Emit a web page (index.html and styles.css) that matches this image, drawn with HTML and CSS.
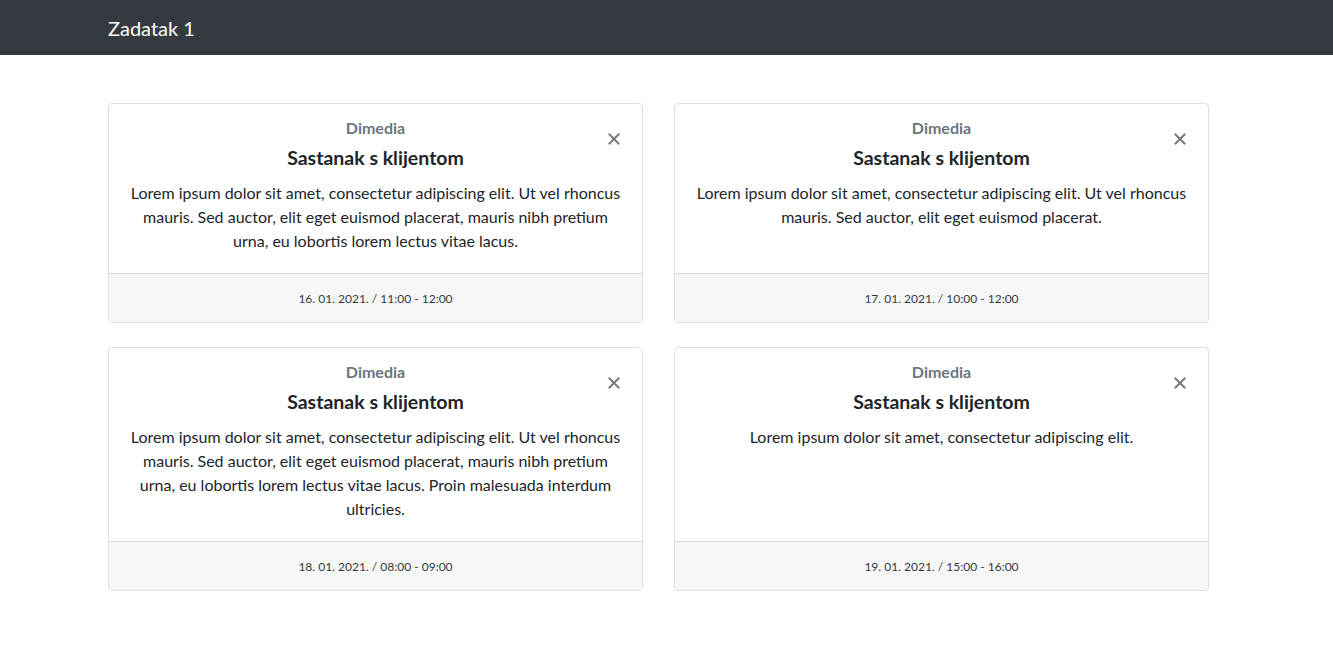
FILE: index.html
```html
<!DOCTYPE html>
<html lang="hr">
<head>
<meta charset="utf-8">
<title>Zadatak 1</title>
<link rel="stylesheet" href="styles.css">
</head>
<body>
<nav class="navbar">
  <div class="wrap">
    <a class="brand" href="#">Zadatak 1</a>
  </div>
</nav>
<main class="wrap grid">
  <div class="card">
    <div class="card-body">
      <button class="close" aria-label="Close"><svg width="12" height="12" viewBox="0 0 12 12"><path d="M1.5 1.5L10.5 10.5M10.5 1.5L1.5 10.5" stroke="currentColor" stroke-width="2" stroke-linecap="square"/></svg></button>
      <h6 class="subtitle">Dimedia</h6>
      <h5 class="title">Sastanak s klijentom</h5>
      <p class="text">Lorem ipsum dolor sit amet, consectetur adipiscing elit. Ut vel rhoncus mauris. Sed auctor, elit eget euismod placerat, mauris nibh pretium urna, eu lobortis lorem lectus vitae lacus.</p>
    </div>
    <div class="card-footer">16. 01. 2021. / 11:00 - 12:00</div>
  </div>
  <div class="card">
    <div class="card-body">
      <button class="close" aria-label="Close"><svg width="12" height="12" viewBox="0 0 12 12"><path d="M1.5 1.5L10.5 10.5M10.5 1.5L1.5 10.5" stroke="currentColor" stroke-width="2" stroke-linecap="square"/></svg></button>
      <h6 class="subtitle">Dimedia</h6>
      <h5 class="title">Sastanak s klijentom</h5>
      <p class="text">Lorem ipsum dolor sit amet, consectetur adipiscing elit. Ut vel rhoncus mauris. Sed auctor, elit eget euismod placerat.</p>
    </div>
    <div class="card-footer">17. 01. 2021. / 10:00 - 12:00</div>
  </div>
  <div class="card">
    <div class="card-body">
      <button class="close" aria-label="Close"><svg width="12" height="12" viewBox="0 0 12 12"><path d="M1.5 1.5L10.5 10.5M10.5 1.5L1.5 10.5" stroke="currentColor" stroke-width="2" stroke-linecap="square"/></svg></button>
      <h6 class="subtitle">Dimedia</h6>
      <h5 class="title">Sastanak s klijentom</h5>
      <p class="text">Lorem ipsum dolor sit amet, consectetur adipiscing elit. Ut vel rhoncus mauris. Sed auctor, elit eget euismod placerat, mauris nibh pretium urna, eu lobortis lorem lectus vitae lacus. Proin malesuada interdum ultricies.</p>
    </div>
    <div class="card-footer">18. 01. 2021. / 08:00 - 09:00</div>
  </div>
  <div class="card">
    <div class="card-body">
      <button class="close" aria-label="Close"><svg width="12" height="12" viewBox="0 0 12 12"><path d="M1.5 1.5L10.5 10.5M10.5 1.5L1.5 10.5" stroke="currentColor" stroke-width="2" stroke-linecap="square"/></svg></button>
      <h6 class="subtitle">Dimedia</h6>
      <h5 class="title">Sastanak s klijentom</h5>
      <p class="text">Lorem ipsum dolor sit amet, consectetur adipiscing elit.</p>
    </div>
    <div class="card-footer">19. 01. 2021. / 15:00 - 16:00</div>
  </div>
</main>
</body>
</html>
```
FILE: styles.css
```css
* { box-sizing: border-box; }
html, body {
  margin: 0;
  padding: 0;
  background: #fff;
  color: #212529;
  font-family: "Lato", "Liberation Sans", sans-serif;
  font-size: 16px;
  line-height: 24px;
}
.wrap {
  width: 1100px;
  margin-left: 108px;
}
.navbar {
  background: #343a40;
  height: 55px;
  display: flex;
  align-items: center;
}
.brand {
  color: #fff;
  text-decoration: none;
  font-size: 20px;
  line-height: 30px;
  display: inline-block;
  padding-top: 1px;
}
.grid {
  display: grid;
  grid-template-columns: 535px 535px;
  column-gap: 31px;
  row-gap: 24px;
  margin-top: 48px;
}
.card {
  position: relative;
  display: flex;
  flex-direction: column;
  border: 1px solid rgba(0,0,0,.125);
  border-radius: 4px;
  overflow: hidden;
}
.card-body {
  flex: 1;
  padding: 12px 20px 20px;
  text-align: center;
}
.subtitle {
  margin: 0;
  font-size: 16px;
  font-weight: 700;
  line-height: 24px;
  color: #6c757d;
}
.title {
  margin: 3px 0 0;
  font-size: 19.5px;
  font-weight: 700;
  line-height: 30px;
  color: #212529;
}
.text {
  margin: 8px 0 0;
  font-size: 16px;
  line-height: 24px;
}
.close {
  position: absolute;
  top: 28px;
  right: 21px;
  width: 14px;
  height: 14px;
  padding: 0;
  border: 0;
  background: none;
  color: #7a7a7a;
  display: flex;
  align-items: center;
  justify-content: center;
  cursor: pointer;
}
.card-footer {
  background: #f7f7f7;
  border-top: 1px solid rgba(0,0,0,.125);
  padding: 13px 20px 11px;
  text-align: center;
  font-size: 12px;
  line-height: 24px;
  color: #343a40;
}
```
